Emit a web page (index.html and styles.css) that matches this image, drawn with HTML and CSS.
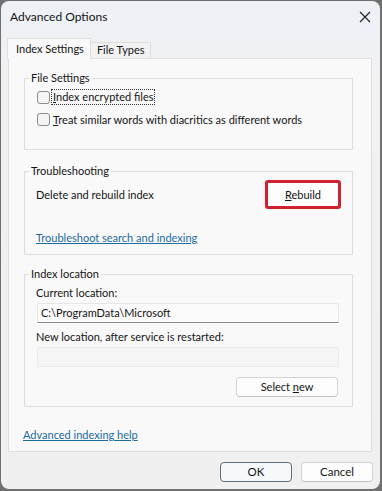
FILE: index.html
```html
<!DOCTYPE html>
<html lang="en">
<head>
  <meta charset="UTF-8">
  <title>Advanced Options</title>
  <link rel="stylesheet" href="styles.css">
</head>
<body>
  <div class="window">
    <div class="titlebar">
      <span class="title">Advanced Options</span>
      <span class="close">
        <svg width="12" height="12" viewBox="0 0 12 12"><path d="M1 1 L11 11 M11 1 L1 11" stroke="#1f1f1f" stroke-width="1.1" fill="none"/></svg>
      </span>
    </div>

    <div class="tabs">
      <div class="tab active">Index Settings</div>
      <div class="tab">File Types</div>
    </div>

    <div class="panel">
      <fieldset class="group g1">
        <legend>File Settings</legend>
        <div class="inner">
          <label class="check">
            <span class="box"></span>
            <span class="focus"><u>I</u>ndex encrypted files</span>
          </label>
          <label class="check">
            <span class="box"></span>
            <span class="txt"><u>T</u>reat similar words with diacritics as different words</span>
          </label>
        </div>
      </fieldset>

      <fieldset class="group g2">
        <legend>Troubleshooting</legend>
        <div class="inner">
          <div class="row">
            <span>Delete and rebuild index</span>
            <span class="mark"><button class="btn rebuild"><u>R</u>ebuild</button></span>
          </div>
          <a class="link trouble" href="#">Troubleshoot search and indexing</a>
        </div>
      </fieldset>

      <fieldset class="group g3">
        <legend>Index location</legend>
        <div class="inner">
          <div class="label">Current location:</div>
          <div class="field">C:\ProgramData\Microsoft</div>
          <div class="label">New location, after service is restarted:</div>
          <div class="field empty"></div>
          <div class="right">
            <button class="btn select">Select <u>n</u>ew</button>
          </div>
        </div>
      </fieldset>

      <a class="link help" href="#">Advanced indexing help</a>
    </div>

    <div class="footer">
      <button class="btn dlg ok">OK</button>
      <button class="btn dlg">Cancel</button>
    </div>
  </div>
</body>
</html>
```

FILE: styles.css
```css
html, body {
  margin: 0;
  height: 100%;
}
body {
  background: #707070;
  font-family: "Segoe UI", Lato, sans-serif;
  font-size: 11px;
  color: #141414;
  overflow: hidden;
}
.window {
  box-sizing: border-box;
  height: 488px;
  margin: 1px 2px 0 1px;
  background: linear-gradient(#edf1f6, #f0f1f3 80px, #f0f0f0);
  border-radius: 8px;
  display: flex;
  flex-direction: column;
}
.titlebar {
  height: 31px;
  display: flex;
  align-items: center;
  justify-content: space-between;
  padding: 0 9px 0 9px;
}
.title {
  font-size: 12px;
  line-height: 16px;
}
.close {
  width: 12px;
  height: 12px;
  display: flex;
}

.tabs {
  display: flex;
  align-items: flex-end;
  height: 26px;
  padding-left: 6px;
  font-size: 11px;
}
.tab {
  box-sizing: border-box;
  height: 16px;
  line-height: 14px;
  padding: 0 5px 0 6px;
  border: 1px solid #dedede;
  border-bottom: none;
  background: #f2f2f2;
  margin-left: -1px;
}
.tab.active {
  height: 21px;
  line-height: 19px;
  padding: 0 6px 0 8px;
  background: #f9f9f9;
  position: relative;
  z-index: 1;
  margin-bottom: -1px;
  margin-left: 0;
}
.panel {
  box-sizing: border-box;
  height: 394px;
  margin: 0 8px 0 7px;
  background: #f9f9f9;
  border: 1px solid #dedede;
  padding: 11px 18px 0 15px;
}

.group {
  margin: 0;
  border: 1px solid #dcdcdc;
  padding: 0;
}
.group legend {
  padding: 0 2px;
  margin-left: 4px;
  line-height: 16px;
}
.g1 .inner {
  padding: 3px 0 22px 12px;
}
.g2 {
  margin-top: 13px;
}
.g2 .inner {
  padding: 1px 11px 8px 11px;
}
.g3 {
  margin-top: 11px;
}
.g3 .inner {
  padding: 3px 13px 9px 12px;
}

.check {
  display: flex;
  align-items: center;
  height: 16px;
}
.check + .check {
  margin-top: 6px;
}
.box {
  box-sizing: border-box;
  width: 13px;
  height: 13px;
  border: 1px solid #8c8c8c;
  border-radius: 3px;
  background: #f5f5f5;
  margin-right: 2px;
}
.focus {
  outline: 1px dotted #333;
  line-height: 14px;
  padding: 0 1px;
}
.txt {
  padding: 0 1px;
}

.row {
  display: flex;
  justify-content: space-between;
  align-items: center;
}
.mark {
  border: 3px solid #d3202f;
  border-radius: 3px;
  display: flex;
}
.btn {
  font: inherit;
  color: #141414;
  background: #fdfdfd;
  border: 1px solid #d4d4d4;
  border-bottom-color: #c2c2c2;
  border-radius: 4px;
  padding: 0;
  height: 20px;
  line-height: 18px;
}
.rebuild {
  width: 70px;
  height: 23px;
  border-color: #fff;
  border-radius: 1px;
}
.link {
  display: inline-block;
  color: #1b6aa0;
  line-height: 16px;
}
.trouble {
  margin-top: 21px;
}
.help {
  margin-top: 20px;
  margin-left: -1px;
}

.label {
  line-height: 16px;
  margin-left: -1px;
}
.field {
  box-sizing: border-box;
  height: 20px;
  margin: 2px 0 6px;
  padding: 0 3px;
  line-height: 18px;
  background: #fbfbfb;
  border: 1px solid #e6e6e6;
  border-bottom-color: #8a8a8a;
  border-radius: 3px 3px 0 0;
}
.field.empty {
  background: #f5f5f5;
  border-color: #e8e8e8;
  margin-bottom: 0;
}
.right {
  display: flex;
  justify-content: flex-end;
  margin-top: 10px;
  padding-right: 1px;
}
.select {
  width: 102px;
}

.footer {
  display: flex;
  justify-content: flex-end;
  gap: 9px;
  padding: 10px 7px 0 0;
}
.dlg {
  width: 72px;
  font-size: 11.5px;
}
.ok {
  border-color: #5b6e80;
  background: #f6f9fb;
}
```
